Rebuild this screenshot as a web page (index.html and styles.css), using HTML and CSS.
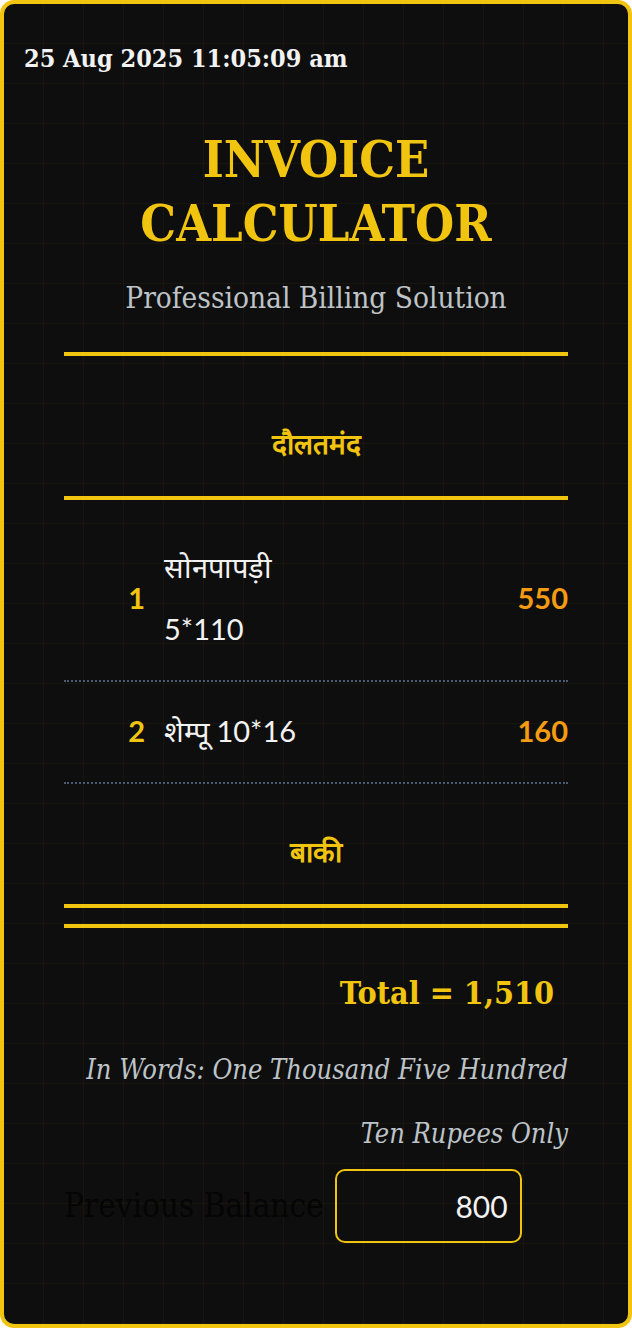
FILE: index.html
```html
<!DOCTYPE html>
<html lang="hi">
<head>
<meta charset="utf-8">
<title>Invoice Calculator</title>
<link rel="stylesheet" href="styles.css">
</head>
<body>
<div class="app">
  <div class="clock">25 Aug 2025 11:05:09 am</div>
  <main class="sheet">
    <header class="brand">
      <h1 class="brand-title">INVOICE<br>CALCULATOR</h1>
      <p class="brand-sub">Professional Billing Solution</p>
    </header>
    <div class="customer">दौलतमंद</div>
    <ul class="items">
      <li class="item">
        <span class="item-no">1</span>
        <span class="item-desc">सोनपापड़ी 5*110</span>
        <span class="item-amt">550</span>
      </li>
      <li class="item">
        <span class="item-no">2</span>
        <span class="item-desc">शेम्पू 10*16</span>
        <span class="item-amt">160</span>
      </li>
    </ul>
    <div class="note">बाकी</div>
    <div class="double-rule"></div>
    <div class="total">Total = 1,510</div>
    <p class="words">In Words: One Thousand Five Hundred Ten Rupees Only</p>
    <div class="prev">
      <label class="prev-label" for="prev">Previous Balance</label>
      <input class="prev-input" id="prev" type="text" value="800">
    </div>
  </main>
</div>
</body>
</html>
```
FILE: styles.css
```css
html, body {
  margin: 0;
  padding: 0;
}

body {
  background: #ffffff;
  font-family: "DejaVu Serif Condensed", "DejaVu Serif", serif;
}

.app {
  box-sizing: border-box;
  height: 1328px;
  overflow: hidden;
  border: 4px solid #f1c40f;
  border-radius: 14px;
  padding: 39px 20px 0;
  background-color: #0e0e0e;
  background-image:
    linear-gradient(rgba(241, 196, 15, 0.045) 1px, transparent 1px),
    linear-gradient(90deg, rgba(241, 196, 15, 0.045) 1px, transparent 1px);
  background-size: 40px 40px;
  background-position: 39px 39px;
}

.clock {
  font-size: 25px;
  line-height: 32px;
  font-weight: bold;
  color: #f2f2f2;
}

.sheet {
  padding: 0 40px;
}

.brand {
  text-align: center;
  padding-bottom: 34px;
  border-bottom: 4px solid #f1c40f;
}

.brand-title {
  margin: 53px 0 0;
  font-size: 50px;
  line-height: 64px;
  font-weight: bold;
  color: #f1c40f;
}

.brand-sub {
  margin: 22px 0 0;
  font-size: 29.5px;
  line-height: 40px;
  color: #bdc3c7;
}

.customer,
.note {
  text-align: center;
  font-size: 28px;
  line-height: 40px;
  font-weight: bold;
  color: #f1c40f;
}

.customer {
  padding: 69px 0 31px;
  border-bottom: 4px solid #f1c40f;
}

.items {
  list-style: none;
  margin: 18px 0 0;
  padding: 0;
}

.item {
  display: grid;
  grid-template-columns: 81px 170px 1fr;
  column-gap: 19px;
  align-items: center;
  padding: 18px 0 20px;
  border-bottom: 2px dotted #4b5b70;
  font-family: Lato, sans-serif;
  font-size: 29px;
  line-height: 62px;
}

.item-no {
  text-align: right;
  font-weight: bold;
  color: #f1c40f;
}

.item-desc {
  color: #f2f2f2;
}

.item-amt {
  text-align: right;
  font-weight: bold;
  color: #f39c12;
}

.note {
  padding: 49px 0 31px;
}

.double-rule {
  height: 16px;
  border-top: 4px solid #f1c40f;
  border-bottom: 4px solid #f1c40f;
}

.total {
  margin-top: 41px;
  padding-right: 14px;
  text-align: right;
  font-size: 32px;
  line-height: 48px;
  font-weight: bold;
  color: #f1c40f;
}

.words {
  margin: 21px 0 0;
  text-align: right;
  font-size: 27px;
  line-height: 64px;
  font-style: italic;
  color: #bdc3c7;
}

.prev {
  display: flex;
  align-items: center;
  gap: 11px;
  margin-top: 3px;
}

.prev-label {
  font-size: 33px;
  line-height: 40px;
  color: #050505;
}

.prev-input {
  box-sizing: border-box;
  width: 187px;
  height: 74px;
  padding: 0 12px 0 14px;
  border: 2px solid #f1c40f;
  border-radius: 10px;
  background: transparent;
  color: #f2f2f2;
  font-family: Lato, sans-serif;
  font-size: 30px;
  text-align: right;
  outline: none;
}
```
